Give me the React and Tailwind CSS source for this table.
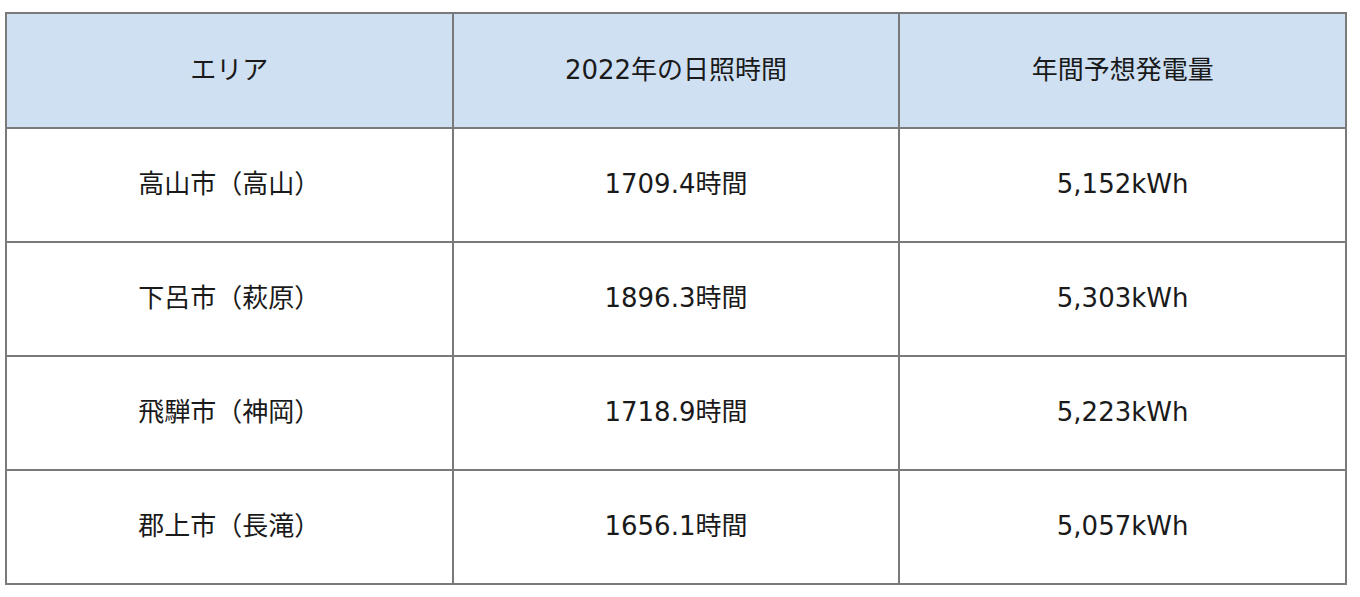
import React from 'react';

const rows = [
    ['高山市（高山）', '1709.4時間', '5,152kWh'],
    ['下呂市（萩原）', '1896.3時間', '5,303kWh'],
    ['飛騨市（神岡）', '1718.9時間', '5,223kWh'],
    ['郡上市（長滝）', '1656.1時間', '5,057kWh'],
];

export default function App() {
    return (
        <div className="w-[1360px] h-[597px] bg-white pt-[12px] pl-[5px] font-['DejaVu_Sans','Noto_Sans_CJK_JP',sans-serif] text-[26px] leading-[1.2] text-[#1a1a1a]">
            <table className="border-collapse w-[1342px] table-fixed">
                <thead>
                    <tr className="bg-[#cfe0f3] h-[115px]">
                        <th className="font-normal border-2 border-[#7a7a7a] text-center">エリア</th>
                        <th className="font-normal border-2 border-[#7a7a7a] text-center">2022年の日照時間</th>
                        <th className="font-normal border-2 border-[#7a7a7a] text-center">年間予想発電量</th>
                    </tr>
                </thead>
                <tbody>
                    {rows.map((r) => (
                        <tr key={r[0]} className="h-[114px]">
                            {r.map((c, i) => (
                                <td key={i} className="border-2 border-[#7a7a7a] text-center">{c}</td>
                            ))}
                        </tr>
                    ))}
                </tbody>
            </table>
        </div>
    );
}
